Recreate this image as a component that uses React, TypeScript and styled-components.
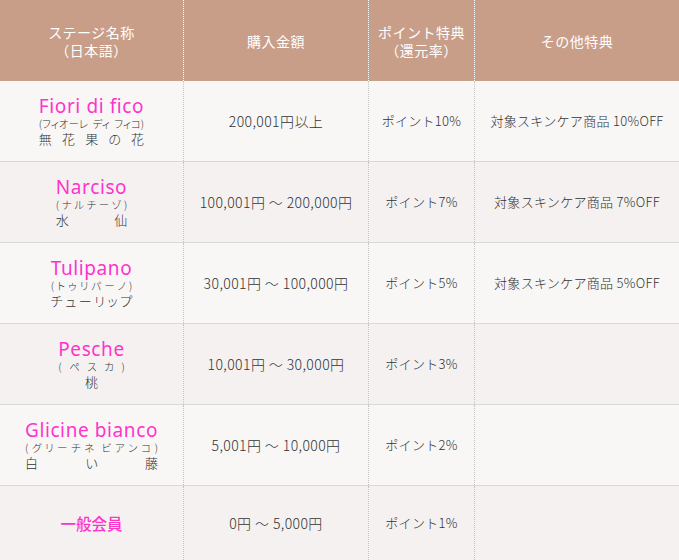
import React from "react";
import styled, { createGlobalStyle } from "styled-components";

const Global = createGlobalStyle`
  html, body { margin: 0; padding: 0; background: #ffffff; }
  body { font-family: "Noto Sans CJK JP", "Noto Sans", sans-serif; color: #333; }
`;

const Table = styled.div`
  width: 679px;
  display: flex;
  flex-direction: column;
`;

const Row = styled.div<{ $head?: boolean; $alt?: boolean; $last?: boolean }>`
  display: grid;
  grid-template-columns: 183px 185px 106px 1fr;
  height: ${(p) => (p.$head ? "81px" : p.$last ? "74px" : "80px")};
  background: ${(p) => (p.$head ? "#c99e89" : p.$alt ? "#f4f1f0" : "#f8f7f6")};
  border-bottom: ${(p) => (p.$head || p.$last ? "none" : "1px solid #dcd8d6")};
`;

const Cell = styled.div<{ $head?: boolean; $first?: boolean }>`
  display: flex;
  align-items: center;
  justify-content: center;
  text-align: center;
  border-left: ${(p) => (p.$first ? "none" : p.$head ? "1px dotted #ffffff" : "1px dotted #c6c4c3")};
  color: ${(p) => (p.$head ? "#ffffff" : "#333333")};
  font-size: ${(p) => (p.$head ? "14px" : "13px")};
  font-weight: ${(p) => (p.$head ? 400 : 300)};
  letter-spacing: ${(p) => (p.$head ? "0.5px" : "0.3px")};
  line-height: 18px;
  white-space: nowrap;
`;

const Amount = styled.span`
  font-size: 14px;
  letter-spacing: 0.4px;
`;

const NameBlock = styled.div`
  display: inline-flex;
  flex-direction: column;
  align-items: stretch;
`;

const Name = styled.div`
  font-family: "Noto Sans", "Noto Sans CJK JP", sans-serif;
  font-size: 19px;
  font-weight: 400;
  line-height: 20px;
  color: #ff33cc;
  letter-spacing: 0.6px;
  white-space: nowrap;
`;

const PlainName = styled.div`
  font-size: 15.5px;
  font-weight: 500;
  color: #ff33cc;
  line-height: 20px;
  letter-spacing: 0;
`;

const Sub = styled.div<{ $small?: boolean; $center?: boolean }>`
  width: 0;
  min-width: 100%;
  display: flex;
  justify-content: ${(p) => (p.$center ? "center" : "space-between")};
  font-size: ${(p) => (p.$small ? "10.5px" : "13px")};
  font-weight: 300;
  line-height: 15px;
  letter-spacing: 0;
  color: #333;
  font-feature-settings: "palt";
  white-space: nowrap;
`;

type Stage = {
  name: string;
  plain?: boolean;
  kana?: string[];
  ja?: string[];
  jaCenter?: boolean;
  amount: string;
  point: string;
  other: string;
};

const stages: Stage[] = [
  {
    name: "Fiori di fico",
    kana: ["(フィオーレ", "ディ", "フィコ)"],
    ja: ["無", "花", "果", "の", "花"],
    amount: "200,001円以上",
    point: "ポイント10%",
    other: "対象スキンケア商品 10%OFF",
  },
  {
    name: "Narciso",
    kana: ["(", "ナ", "ル", "チ", "ー", "ゾ", ")"],
    ja: ["水", "仙"],
    amount: "100,001円 〜 200,000円",
    point: "ポイント7%",
    other: "対象スキンケア商品 7%OFF",
  },
  {
    name: "Tulipano",
    kana: ["(", "ト", "ゥ", "リ", "パ", "ー", "ノ", ")"],
    ja: ["チ", "ュ", "ー", "リ", "ッ", "プ"],
    amount: "30,001円 〜 100,000円",
    point: "ポイント5%",
    other: "対象スキンケア商品 5%OFF",
  },
  {
    name: "Pesche",
    kana: ["(", "ペ", "ス", "カ", ")"],
    ja: ["桃"],
    jaCenter: true,
    amount: "10,001円 〜 30,000円",
    point: "ポイント3%",
    other: "",
  },
  {
    name: "Glicine bianco",
    kana: ["(", "グ", "リ", "ー", "チ", "ネ", "", "ビ", "ア", "ン", "コ", ")"],
    ja: ["白", "い", "藤"],
    amount: "5,001円 〜 10,000円",
    point: "ポイント2%",
    other: "",
  },
  {
    name: "一般会員",
    plain: true,
    amount: "0円 〜 5,000円",
    point: "ポイント1%",
    other: "",
  },
];

export default function App() {
  return (
    <>
      <Global />
      <Table>
        <Row $head>
          <Cell $head $first>
            ステージ名称
            <br />
            （日本語）
          </Cell>
          <Cell $head>購入金額</Cell>
          <Cell $head>
            ポイント特典
            <br />
            （還元率）
          </Cell>
          <Cell $head>その他特典</Cell>
        </Row>
        {stages.map((s, i) => (
          <Row key={s.name} $alt={i % 2 === 1} $last={i === stages.length - 1}>
            <Cell $first>
              {s.plain ? (
                <PlainName>{s.name}</PlainName>
              ) : (
                <NameBlock>
                  <Name>{s.name}</Name>
                  <Sub $small>
                    {s.kana!.map((k, j) => (
                      <span key={j}>{k}</span>
                    ))}
                  </Sub>
                  <Sub $center={s.jaCenter}>
                    {s.ja!.map((k, j) => (
                      <span key={j}>{k}</span>
                    ))}
                  </Sub>
                </NameBlock>
              )}
            </Cell>
            <Cell>
              <Amount>{s.amount}</Amount>
            </Cell>
            <Cell>{s.point}</Cell>
            <Cell>{s.other}</Cell>
          </Row>
        ))}
      </Table>
    </>
  );
}
